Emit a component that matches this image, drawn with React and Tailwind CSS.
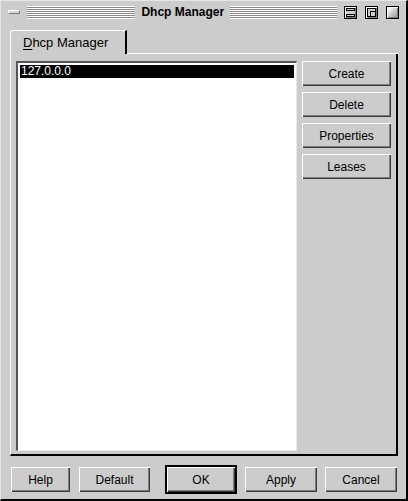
import React from 'react';

const font = { fontFamily: '"Liberation Sans", Arial, sans-serif' };

const Btn = ({ children, className = '' }) => (
  <div
    className={`flex items-center justify-center h-[25px] bg-[#cccccc] text-[12px] text-black shadow-[inset_1px_1px_0_#ffffff,inset_-1px_-1px_0_#3c3c3c,inset_-2px_-2px_0_#7c7c7c] ${className}`}
  >
    {children}
  </div>
);

const Stripes = ({ className = '' }) => (
  <div
    className={`h-[13px] bg-[repeating-linear-gradient(to_bottom,#ffffff_0px,#ffffff_1px,#8a8a8a_1px,#8a8a8a_2px)] ${className}`}
  />
);

const TitleBox = ({ children }) => (
  <div className="w-[13px] h-[13px] bg-[#cccccc] border border-black shadow-[inset_1px_1px_0_#ffffff,inset_-1px_-1px_0_#7c7c7c] flex items-center justify-center">
    {children}
  </div>
);

export default function App() {
  return (
    <div
      style={font}
      className="w-[408px] h-[501px] bg-[#cccccc] border-l border-t border-[#e6e6e6] border-r-2 border-b-2 border-r-black border-b-black flex flex-col"
    >
      {/* title bar */}
      <div className="h-[22px] flex items-center pl-[7px] pr-[7px] gap-[4px]">
        <div className="w-[12px] h-[4px] bg-[#d8d8d8] border-t border-l border-white border-r border-b border-r-[#7c7c7c] border-b-[#7c7c7c] mr-[3px]" />
        <Stripes className="w-[112px] mt-[1px]" />
        <div className="w-[90px] text-center font-bold text-[12px] leading-none text-black">Dhcp Manager</div>
        <Stripes className="w-[110px] mt-[1px]" />
        <div className="flex gap-[8px] ml-[3px] mt-[1px]">
          <TitleBox>
            <div className="w-[9px] h-[9px] flex flex-col justify-between">
              <div className="h-[3px] border border-black" />
              <div className="h-[3px] border border-black" />
            </div>
          </TitleBox>
          <TitleBox>
            <div className="w-[9px] h-[9px] border border-black relative">
              <div className="absolute right-0 bottom-0 w-[5px] h-[5px] border-l border-t border-black" />
            </div>
          </TitleBox>
          <TitleBox>
            <div className="w-[9px] h-[9px] bg-[linear-gradient(135deg,#ffffff,#9a9a9a)]" />
          </TitleBox>
        </div>
      </div>

      {/* tab */}
      <div className="pl-[9px] pr-[8px] pt-[7px] flex flex-col">
        <div className="flex items-end">
          <div className="w-[117px] h-[24px] rounded-tl-[3px] border-l border-t border-white border-r-2 border-r-black flex items-center pl-[12px] text-[13px] text-black">
            <span>
              <span className="underline underline-offset-2">D</span>hcp Manager
            </span>
          </div>
          <div className="flex-1 border-t border-white h-[1px]" />
        </div>

        {/* panel */}
        <div className="h-[402px] border-l border-white border-r-2 border-b-2 border-r-black border-b-black flex pl-[5px] pr-[5px] pt-[7px] pb-[5px] gap-[5px]">
          <div className="w-[281px] shrink-0 h-[390px] bg-white border-l-2 border-t-2 border-l-[#555555] border-t-[#555555] border-r border-b border-r-[#e8e8e8] border-b-[#e8e8e8] p-[1px]">
            <div className="h-[15px] bg-black border border-white text-white text-[12px] leading-[13px] pl-[1px]">127.0.0.0</div>
          </div>
          <div className="w-[89px] shrink-0 flex flex-col gap-[6px]">
            <Btn>Create</Btn>
            <Btn>Delete</Btn>
            <Btn>Properties</Btn>
            <Btn>Leases</Btn>
          </div>
        </div>
      </div>

      {/* bottom buttons */}
      <div className="flex items-center pl-[10px] pt-[9px]">
        <Btn className="w-[59px]">Help</Btn>
        <Btn className="w-[71px] ml-[9px]">Default</Btn>
        <div className="ml-[15px] border-2 border-black">
          <Btn className="w-[68px] h-[21px]">OK</Btn>
        </div>
        <Btn className="w-[72px] ml-[8px]">Apply</Btn>
        <Btn className="w-[72px] ml-[8px]">Cancel</Btn>
      </div>
    </div>
  );
}
